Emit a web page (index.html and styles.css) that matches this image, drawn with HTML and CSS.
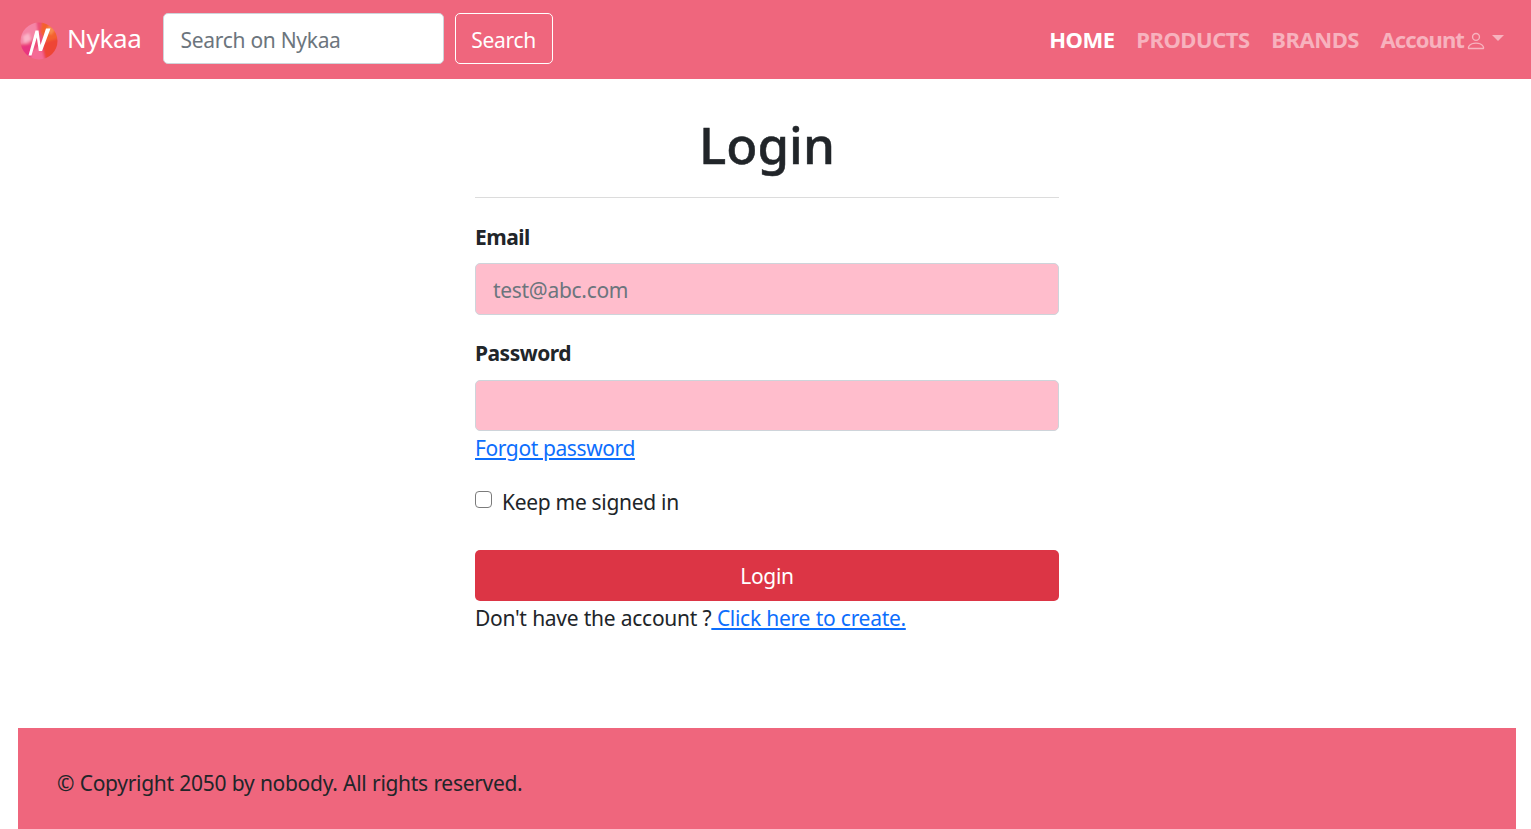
FILE: index.html
```html
<!DOCTYPE html>
<html lang="en">
<head>
<meta charset="utf-8">
<title>Nykaa Login</title>
<link rel="stylesheet" href="styles.css">
</head>
<body>
<header class="navbar">
  <a class="brand" href="#">
    <svg class="logo" viewBox="0 0 38 38" aria-hidden="true">
      <defs>
        <clipPath id="c"><circle cx="19" cy="19" r="18.5"/></clipPath>
        <filter id="b" x="-10%" y="-10%" width="120%" height="120%"><feGaussianBlur stdDeviation="1"/></filter>
      </defs>
      <g clip-path="url(#c)">
        <g filter="url(#b)">
          <rect x="-2" y="-2" width="42" height="42" fill="#ee4f7a"/>
          <path d="M-2 6 L16 -2 L18 12 L8 22 L-2 22Z" fill="#f585a6"/>
          <path d="M3 14 L9 11 L11 18 L4 21Z" fill="#fab4c8"/>
          <path d="M22 -2 H40 V18 L27 22 L20 10Z" fill="#f4602f"/>
          <path d="M29 3 L36 7 L31 13 L26 9Z" fill="#f78a4d"/>
          <path d="M22 21 L40 16 V36 L26 40Z" fill="#ee4436"/>
          <path d="M-2 25 L11 22 L13 40 H-2Z" fill="#e8367f"/>
          <path d="M11 29 L21 24 L25 40 H11Z" fill="#f56a95"/>
        </g>
      </g>
      <path d="M8.5 33.5 L15.5 8.5 L18.5 8.5 L20.5 23 L26 6.5 L30.5 6.5 L22 29 L18.8 29 L16.8 15.5 L11.5 33.5Z" fill="#fff"/>
    </svg>
    <span>Nykaa</span>
  </a>
  <form class="search">
    <input class="search-input" type="text" placeholder="Search on Nykaa">
    <button class="search-btn" type="button">Search</button>
  </form>
  <nav class="nav">
    <a class="nav-link active" href="#">HOME</a>
    <a class="nav-link" href="#">PRODUCTS</a>
    <a class="nav-link" href="#">BRANDS</a>
    <a class="nav-link account" href="#">Account<svg class="user" viewBox="0 0 16 16" fill="currentColor" aria-hidden="true"><path d="M8 8a3 3 0 1 0 0-6 3 3 0 0 0 0 6Zm2-3a2 2 0 1 1-4 0 2 2 0 0 1 4 0Zm4 8c0 1-1 1-1 1H3s-1 0-1-1 1-4 6-4 6 3 6 4Zm-1-.004c-.001-.246-.154-.986-.832-1.664C11.516 10.68 10.289 10 8 10c-2.29 0-3.516.68-4.168 1.332-.678.678-.83 1.418-.832 1.664h10Z"/></svg><i class="caret"></i></a>
  </nav>
</header>
<main class="main">
  <h1 class="title">Login</h1>
  <hr class="rule">
  <form class="login">
    <label class="label" for="email">Email</label>
    <input class="field email" id="email" type="email" placeholder="test@abc.com">
    <label class="label pw" for="password">Password</label>
    <input class="field" id="password" type="password">
    <a class="link forgot" href="#">Forgot password</a>
    <label class="check"><input class="box" type="checkbox"><span>Keep me signed in</span></label>
    <button class="submit" type="button">Login</button>
    <p class="signup">Don't have the account ?<a class="link" href="#"> Click here to create.</a></p>
  </form>
</main>
<footer class="footer">
  <p>© Copyright 2050 by nobody. All rights reserved.</p>
</footer>
</body>
</html>
```
FILE: styles.css
```css
* { box-sizing: border-box; }
html, body { margin: 0; height: 829px; overflow: hidden; }
body {
  background: #fff;
  color: #212529;
  font-family: "Noto Sans", "Open Sans", sans-serif;
  font-size: 21px;
  line-height: 1.5;
  letter-spacing: -0.3px;
  display: flex;
  flex-direction: column;
}
a { text-decoration: none; }
.navbar {
  height: 79px;
  background: #ef667d;
  display: flex;
  align-items: center;
  padding: 0 27px 0 20px;
  flex: none;
}
.brand { display: flex; align-items: center; color: #fff; font-size: 26px; gap: 9px; margin-right: 21px; margin-top: -2px; }
.logo { width: 38px; height: 38px; flex: none; margin-top: 5px; }
.search { display: flex; gap: 11px; margin-top: -2px; }
.search-input {
  width: 281px; height: 51px;
  border: 1px solid #ced4da; border-radius: 5px;
  padding: 2px 17px 0; background: #fff;
  font: inherit; letter-spacing: inherit; color: #212529;
}
.search-input::placeholder, .field::placeholder { color: #6c757d; opacity: 1; }
.search-btn {
  width: 98px; height: 51px;
  border: 1px solid #fff; border-radius: 5px;
  padding: 4px 0 0;
  background: transparent; color: #fff;
  font: inherit; letter-spacing: inherit;
}
.nav { margin-left: auto; display: flex; align-items: center; gap: 21.5px; }
.nav-link { color: rgba(255,255,255,.5); font-weight: 700; font-size: 22px; letter-spacing: -0.45px; display: flex; align-items: center; }
.nav-link.active { color: #fff; }
.account { letter-spacing: -0.9px; }
.user { width: 22px; height: 22px; margin: 3px 0 0 1px; }
.caret { width: 0; height: 0; margin-left: 5px; margin-bottom: 4px; border-top: 6px solid; border-left: 6.5px solid transparent; border-right: 6.5px solid transparent; }
.main { width: 584px; margin-left: 475px; flex: 1; padding-top: 31px; }
.title { margin: 0; text-align: center; font-size: 51px; line-height: 68px; font-weight: 500; letter-spacing: 0; -webkit-text-stroke: 0.5px #212529; }
.rule { margin: 19px 0 0; border: 0; border-top: 1px solid #dcdcdc; }
.login { display: flex; flex-direction: column; align-items: flex-start; margin-top: 23px; }
.label { font-weight: 700; line-height: 32px; margin-bottom: 10px; letter-spacing: -0.5px; }
.label.pw { margin-top: 22px; margin-bottom: 11px; }
.field {
  width: 100%; height: 51px;
  background: #ffbdcc;
  border: 1px solid #ced4da; border-radius: 5px;
  padding: 0 17px;
  font: inherit; letter-spacing: inherit; color: #212529;
}
.field.email { height: 52px; padding-top: 1px; }
.link { color: #0d6efd; text-decoration: underline; }
.forgot { line-height: 32px; margin-top: 1px; letter-spacing: -0.4px; }
.check { display: flex; align-items: flex-start; margin-top: 22px; line-height: 32px; }
.box { appearance: none; width: 17px; height: 17px; margin: 5px 10px 0 0; border: 1px solid #7b7b7b; border-radius: 4px; background: #fff; }
.submit {
  width: 100%; height: 51px; margin-top: 32px;
  padding: 2px 0 0;
  background: #dc3545; color: #fff;
  border: 0; border-radius: 5px;
  font: inherit; letter-spacing: inherit;
}
.signup { margin: 1px 0 0; line-height: 32px; word-spacing: 0.4px; }
.footer {
  height: 101px; flex: none;
  margin: 0 15px 0 18px;
  background: #ef667d;
  padding: 39px 39px 0;
}
.footer p { margin: 0; line-height: 32px; word-spacing: 0.4px; }
```
